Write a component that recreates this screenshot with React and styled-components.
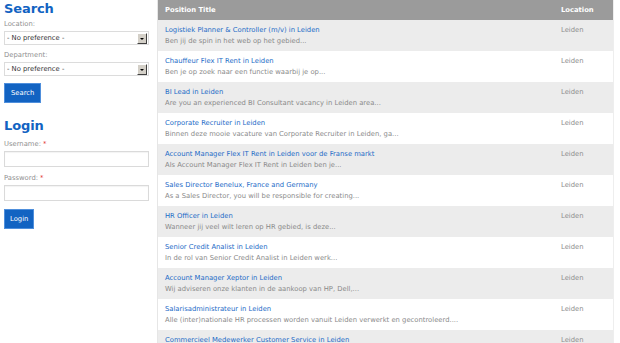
import React from "react";
import styled, { createGlobalStyle } from "styled-components";

const GlobalStyle = createGlobalStyle`
  html, body {
    margin: 0;
    padding: 0;
    background-color: #ffffff;
  }

  body {
    font-family: "DejaVu Sans", Verdana, sans-serif;
    font-size: 6.8px;
  }
`;

const Page = styled.div`
  display: flex;
  width: 620px;
  height: 343px;
  overflow: hidden;
`;

const Sidebar = styled.aside`
  width: 145px;
  flex-shrink: 0;
  padding: 0 8px 0 4px;
  border-right: 1px solid #e6e6e6;
  display: flex;
  flex-direction: column;
`;

const Heading = styled.h2`
  margin: ${(props) => props.$top || "0"} 0 ${(props) => props.$bottom || "3px"} 0;
  color: #1263c2;
  font-family: "DejaVu Sans", Verdana, sans-serif;
  font-weight: bold;
  font-size: 13px;
  line-height: 16px;
  letter-spacing: -0.1px;
`;

const Field = styled.div`
  display: flex;
  flex-direction: column;
  margin-bottom: ${(props) => props.$gap || "6px"};
`;

const Label = styled.label`
  color: #8f8f8f;
  font-size: 6.8px;
  line-height: 8px;
  margin-bottom: 3px;
`;

const Required = styled.span`
  color: #e02020;
  margin-left: 2px;
`;

const SelectBox = styled.div`
  display: flex;
  align-items: center;
  height: 14px;
  border: 1px solid #dcdcdc;
  background-color: #ffffff;
  box-sizing: border-box;
  padding-right: 1px;
`;

const NativeSelect = styled.select`
  appearance: none;
  flex: 1;
  border: none;
  background: transparent;
  font-family: "DejaVu Sans", Verdana, sans-serif;
  font-size: 6.8px;
  color: #333333;
  padding: 0 0 0 2px;
  height: 12px;
  outline: none;
`;

const DropButton = styled.span`
  width: 10px;
  height: 11px;
  box-sizing: border-box;
  background-color: #d4d0c8;
  border-top: 1px solid #ffffff;
  border-left: 1px solid #ffffff;
  border-right: 1px solid #404040;
  border-bottom: 1px solid #404040;
  display: flex;
  align-items: center;
  justify-content: center;

  &::after {
    content: "";
    border-left: 2px solid transparent;
    border-right: 2px solid transparent;
    border-top: 2px solid #000000;
    margin-top: 1px;
  }
`;

const TextInput = styled.input`
  height: 16px;
  box-sizing: border-box;
  border: 1px solid #dadada;
  box-shadow: inset 0 1px 1px rgba(0, 0, 0, 0.05);
  padding: 0 3px;
  font-size: 6.8px;
  outline: none;
`;

const Button = styled.button`
  align-self: flex-start;
  height: 20px;
  padding: 0 ${(props) => props.$pad || "6px"};
  background-color: #1263c2;
  border: 1px solid #4f8fdc;
  color: #ffffff;
  font-family: "DejaVu Sans", Verdana, sans-serif;
  font-size: 6.8px;
  cursor: pointer;
`;

const Main = styled.main`
  width: 455px;
  flex-shrink: 0;
  border-right: 1px solid #eeeeee;
`;

const HeaderRow = styled.div`
  display: grid;
  grid-template-columns: 1fr 52px;
  height: 20px;
  align-items: center;
  background-color: #9b9b9b;
  color: #ffffff;
  font-weight: bold;
  font-size: 6.8px;
  padding-left: 7px;
`;

const JobRow = styled.div`
  display: grid;
  grid-template-columns: 1fr 52px;
  height: 31px;
  box-sizing: border-box;
  padding: 6px 0 0 7px;
  background-color: ${(props) => (props.$striped ? "#ececec" : "#ffffff")};
`;

const JobInfo = styled.div`
  display: flex;
  flex-direction: column;
`;

const JobTitle = styled.a`
  color: #1b6bc7;
  text-decoration: none;
  font-size: 6.8px;
  line-height: 9px;
  margin-bottom: 2px;
`;

const JobSummary = styled.span`
  color: #8a8a8a;
  font-size: 6.8px;
  line-height: 9px;
`;

const JobLocation = styled.span`
  color: #8c8c8c;
  font-size: 6.8px;
  line-height: 9px;
`;

const jobs = [
  ["Logistiek Planner & Controller (m/v) in Leiden", "Ben jij de spin in het web op het gebied..."],
  ["Chauffeur Flex IT Rent in Leiden", "Ben je op zoek naar een functie waarbij je op..."],
  ["BI Lead in Leiden", "Are you an experienced BI Consultant vacancy in Leiden area..."],
  ["Corporate Recruiter in Leiden", "Binnen deze mooie vacature van Corporate Recruiter in Leiden, ga..."],
  ["Account Manager Flex IT Rent in Leiden voor de Franse markt", "Als Account Manager Flex IT Rent in Leiden ben je..."],
  ["Sales Director Benelux, France and Germany", "As a Sales Director, you will be responsible for creating..."],
  ["HR Officer in Leiden", "Wanneer jij veel wilt leren op HR gebied, is deze..."],
  ["Senior Credit Analist in Leiden", "In de rol van Senior Credit Analist in Leiden werk..."],
  ["Account Manager Xeptor in Leiden", "Wij adviseren onze klanten in de aankoop van HP, Dell,..."],
  ["Salarisadministrateur in Leiden", "Alle (inter)nationale HR processen worden vanuit Leiden verwerkt en gecontroleerd...."],
  ["Commercieel Medewerker Customer Service in Leiden", "Als Commercieel Medewerker Customer Service in Leiden..."],
];

const PreferenceSelect = () => (
  <SelectBox>
    <NativeSelect defaultValue="">
      <option value="">- No preference -</option>
    </NativeSelect>
    <DropButton />
  </SelectBox>
);

const App = () => {
  return (
    <Page>
      <GlobalStyle />
      <Sidebar>
        <Heading $top="1px" $bottom="3px">Search</Heading>
        <Field>
          <Label>Location:</Label>
          <PreferenceSelect />
        </Field>
        <Field $gap="7px">
          <Label>Department:</Label>
          <PreferenceSelect />
        </Field>
        <Button>Search</Button>

        <Heading $top="15px" $bottom="6px">Login</Heading>
        <Field $gap="7px">
          <Label>
            Username:<Required>*</Required>
          </Label>
          <TextInput type="text" />
        </Field>
        <Field $gap="8px">
          <Label>
            Password:<Required>*</Required>
          </Label>
          <TextInput type="password" />
        </Field>
        <Button $pad="5px">Login</Button>
      </Sidebar>

      <Main>
        <HeaderRow>
          <span>Position Title</span>
          <span>Location</span>
        </HeaderRow>
        {jobs.map(([title, summary], index) => (
          <JobRow key={title} $striped={index % 2 === 0}>
            <JobInfo>
              <JobTitle href="#">{title}</JobTitle>
              <JobSummary>{summary}</JobSummary>
            </JobInfo>
            <JobLocation>Leiden</JobLocation>
          </JobRow>
        ))}
      </Main>
    </Page>
  );
};

export default App;
